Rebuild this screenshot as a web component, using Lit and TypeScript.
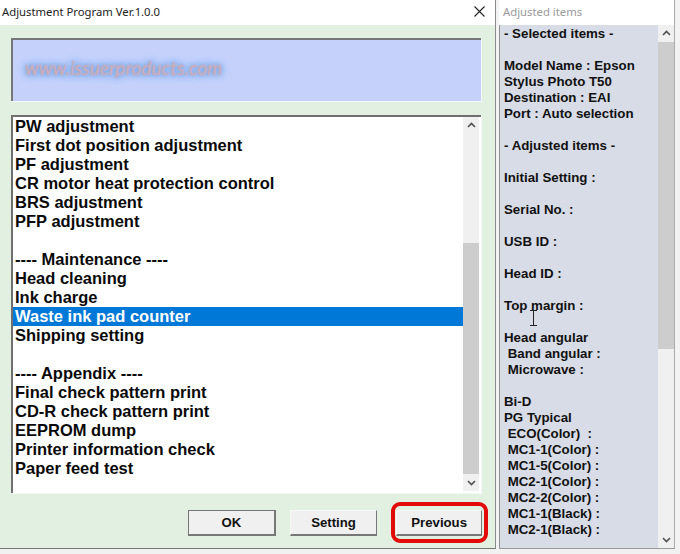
import { LitElement, html, css, svg } from "lit";
import { customElement } from "lit/decorators.js";

const listItems = [
  "PW adjustment", "First dot position adjustment", "PF adjustment", "CR motor heat protection control",
  "BRS adjustment", "PFP adjustment", "", "---- Maintenance ----", "Head cleaning", "Ink charge",
  "Waste ink pad counter", "Shipping setting", "", "---- Appendix ----", "Final check pattern print",
  "CD-R check pattern print", "EEPROM dump", "Printer information check", "Paper feed test",
];
const sideItems = [
  "- Selected items -", "", "Model Name : Epson", "Stylus Photo T50", "Destination : EAI", "Port : Auto selection", "",
  "- Adjusted items -", "", "Initial Setting :", "", "Serial No. :", "", "USB ID :", "", "Head ID :", "", "Top margin :", "",
  "Head angular", " Band angular :", " Microwave :", "", "Bi-D", "PG Typical", " ECO(Color)  :", " MC1-1(Color) :",
  " MC1-5(Color) :", " MC2-1(Color) :", " MC2-2(Color) :", " MC1-1(Black) :", " MC2-1(Black) :",
];
const chevUp = svg`<path d="M1 6 L4.5 2.5 L8 6" fill="none" stroke="#505050" stroke-width="1.6"/>`;
const chevDown = svg`<path d="M1 3 L4.5 6.5 L8 3" fill="none" stroke="#505050" stroke-width="1.6"/>`;

@customElement("app-root")
export class AppRoot extends LitElement {
  static styles = css`
    :host { display: block; width: 680px; height: 554px; background: #f1f1f1; font-family: "Liberation Sans", Arial, sans-serif; overflow: hidden; }
    .desk { display: flex; height: 549px; background: #f3f3f3; }
    .main { width: 496px; flex: none; display: flex; flex-direction: column; border-right: 1px solid #8a8a8a; border-bottom: 1px solid #777; box-sizing: border-box; }
    .title { height: 25px; flex: none; background: #fff; display: flex; align-items: center; justify-content: space-between; font: 11.3px "Noto Sans", "Open Sans", sans-serif; color: #222; padding: 0 10px 2px 2px; box-sizing: border-box; }
    .title.faded { color: #9a9a9a; padding: 0 0 2px 4px; }
    .close { width: 11px; height: 11px; display: block; }
    .body { flex: 1; background: #e2f0e2; padding: 13px 13px 0 11px; display: flex; flex-direction: column; }
    .banner { height: 64px; background: #c5d1fb; border: solid #f4f8f4; border-width: 0 1px 1px 0; box-shadow: inset 2px 2px 0 #777; box-sizing: border-box; display: flex; align-items: center; padding: 0 0 4px 14px; }
    .wm { font: italic 19px "Lato", sans-serif; letter-spacing: 0; color: #c9aebb; text-shadow: 0 0 2px #c6a4c4, 0 0 5px #6fa8e8, 0 0 7px #6fa8e8, 0 0 8px #6fa8e8; }
    .list { margin-top: 13px; height: 379px; background: #fff; border: solid #f6f8f6; border-width: 0 1px 1px 0; box-shadow: inset 2px 2px 0 #6f6f6f; box-sizing: border-box; display: flex; padding: 2px 2px 2px 2px; }
    .rows { flex: 1; min-width: 0; }
    .row { height: 19px; line-height: 19px; padding-left: 2px; font-size: 16.5px; font-weight: 700; color: #0a0a0a; white-space: pre; }
    .row.sel { background: #0078d7; color: #fff; }
    .sb { width: 16px; flex: none; background: #f0f0f0; display: flex; flex-direction: column; }
    .arrow { height: 17px; flex: none; display: flex; align-items: center; justify-content: center; }
    .arrow svg { width: 9px; height: 9px; display: block; }
    .track { flex: 1; display: flex; flex-direction: column; }
    .thumb { background: #cdcdcd; }
    .actions { display: flex; padding: 16px 0 0 177px; }
    .btn { width: 88px; height: 26px; box-sizing: border-box; background: #f0f0f0; border: 1px solid #f8f8f8; border-right-color: #777; border-bottom: 2px solid #777; font-size: 13.2px; font-weight: 700; color: #111; display: flex; align-items: center; justify-content: center; font-family: inherit; padding: 0; }
    .btn.ok { border: 1px solid #777; border-right-width: 2px; border-bottom-width: 2px; }
    .btn.setting { margin-left: 14px; }
    .btn.prev { margin-left: 19px; width: 86px; position: relative; }
    .ring { position: absolute; left: -6px; top: -9px; width: 97px; height: 41px; box-sizing: border-box; border: 4px solid #e30a0a; border-radius: 9px; }
    .gap { width: 3px; flex: none; }
    .panel { width: 176px; flex: none; display: flex; flex-direction: column; border-right: 1px solid #aaa; border-bottom: 1px solid #999; box-sizing: border-box; }
    .sidebody { flex: 1; display: flex; background: #d8dce6; border-left: 1px solid #8f8f8f; min-height: 0; position: relative; }
    .lines { flex: 1; padding: 1px 0 0 4px; min-width: 0; }
    .line { height: 16px; line-height: 16px; font-size: 13.3px; font-weight: 700; color: #111; white-space: pre; }
    .ibeam { position: absolute; left: 29px; top: 285px; width: 9px; height: 16px; }
  `;

  render() {
    return html`
      <div class="desk">
        <section class="main">
          <header class="title"><span>Adjustment Program Ver.1.0.0</span>
            <svg class="close" viewBox="0 0 11 11"><path d="M0.5 0.5 L10.5 10.5 M10.5 0.5 L0.5 10.5" stroke="#222" stroke-width="1.1"/></svg>
          </header>
          <div class="body">
            <div class="banner"><span class="wm">www.issuerproducts.com</span></div>
            <div class="list">
              <div class="rows">
                ${listItems.map((t, i) => html`<div class="row ${i === 10 ? "sel" : ""}">${t}</div>`)}
              </div>
              <div class="sb">
                <div class="arrow"><svg viewBox="0 0 9 9">${chevUp}</svg></div>
                <div class="track"><div style="height:109px"></div><div class="thumb" style="height:231px"></div></div>
                <div class="arrow"><svg viewBox="0 0 9 9">${chevDown}</svg></div>
              </div>
            </div>
            <div class="actions">
              <button class="btn ok">OK</button>
              <button class="btn setting">Setting</button>
              <button class="btn prev">Previous<span class="ring"></span></button>
            </div>
          </div>
        </section>
        <div class="gap"></div>
        <section class="panel">
          <header class="title faded">Adjusted items</header>
          <div class="sidebody">
            <div class="lines">${sideItems.map((t) => html`<div class="line">${t}</div>`)}</div>
            <div class="sb">
              <div class="arrow"><svg viewBox="0 0 9 9">${chevUp}</svg></div>
              <div class="track"><div class="thumb" style="height:307px"></div></div>
              <div class="arrow"><svg viewBox="0 0 9 9">${chevDown}</svg></div>
            </div>
            <svg class="ibeam" viewBox="0 0 9 16"><path d="M1 0.5 H8 M4.5 0.5 V15.5 M1 15.5 H8" stroke="#222" fill="none"/></svg>
          </div>
        </section>
      </div>
    `;
  }
}
